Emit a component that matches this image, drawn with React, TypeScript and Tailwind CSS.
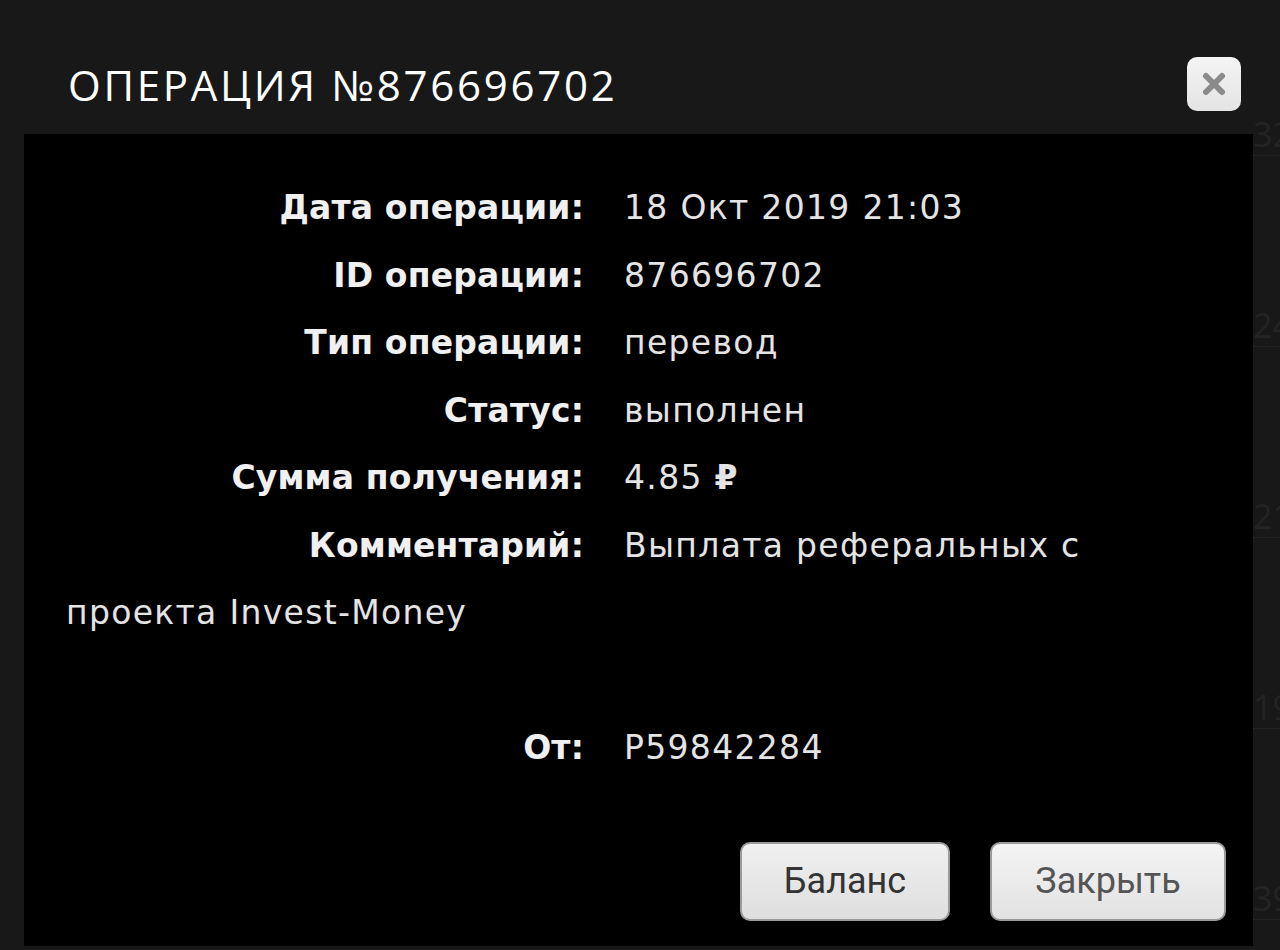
import React from "react";

const rows: { label: string; value: React.ReactNode }[] = [
  { label: "Дата операции:", value: "18 Окт 2019 21:03" },
  { label: "ID операции:", value: "876696702" },
  { label: "Тип операции:", value: "перевод" },
  { label: "Статус:", value: "выполнен" },
  { label: "Сумма получения:", value: <>4.85 <span className="font-bold">₽</span></> },
];

function Label({ children }: { children: React.ReactNode }) {
  return (
    <span className="inline-block w-[558px] pr-[40px] text-right font-semibold tracking-[0.005em] text-[#f0f0f0]">
      {children}
    </span>
  );
}

export default function App() {
  return (
    <div className="flex h-[950px] w-full overflow-hidden bg-[#181818] font-['Open_Sans',sans-serif]">
      <div className="flex w-[1253px] shrink-0 flex-col">
        <div className="flex h-[134px] items-center justify-between pl-[68px] pr-[12px]">
          <h1 className="pt-[36px] text-[42px] font-medium leading-none tracking-[0.065em] text-white">
            ОПЕРАЦИЯ №876696702
          </h1>
          <button className="flex h-[54px] w-[54px] items-center justify-center self-start mt-[57px] rounded-[10px] bg-gradient-to-b from-[#f4f4f4] to-[#e4e4e4]">
            <svg width="26" height="26" viewBox="0 0 26 26">
              <path d="M5 5L21 21M21 5L5 21" stroke="#8a8a8a" strokeWidth="6" strokeLinecap="round" />
            </svg>
          </button>
        </div>
        <div className="ml-[24px] flex h-[812px] flex-col bg-black pl-[42px] pr-[27px] pt-[40px]">
          <div className="pr-[60px] font-['DejaVu_Sans',sans-serif] text-[33px] leading-[67.5px] tracking-[0.04em] text-[#e4e4e4]">
            {rows.map((r) => (
              <div key={r.label}>
                <Label>{r.label}</Label>
                {r.value}
              </div>
            ))}
            <div>
              <Label>Комментарий:</Label>
              Выплата реферальных с проекта Invest-Money
              <br />
              <br />
              <Label>От:</Label>
              P59842284
            </div>
          </div>
          <div className="mt-[60px] flex justify-end gap-[40px] font-['Roboto',sans-serif] text-[36px]">
            <button className="h-[79px] w-[210px] rounded-[10px] border-2 border-[#9a9a9a] bg-gradient-to-b from-[#f0f0f0] to-[#dedede] text-[#333]">
              Баланс
            </button>
            <button className="h-[79px] w-[236px] rounded-[10px] border-2 border-[#9a9a9a] bg-gradient-to-b from-[#f4f4f4] to-[#e2e2e2] text-[#555]">
              Закрыть
            </button>
          </div>
        </div>
      </div>
      <div className="flex flex-1 flex-col gap-[150px] overflow-hidden pt-[115px] font-['Open_Sans',sans-serif] text-[34px] leading-[38px] text-[#242424]">
        {["32", "24", "21", "19", "39"].map((n) => (
          <div key={n} className="whitespace-nowrap">
            {n}
            <div className="mt-[2px] h-0 w-[40px] border-t border-dotted border-[#2a2a2a]" />
          </div>
        ))}
      </div>
    </div>
  );
}
